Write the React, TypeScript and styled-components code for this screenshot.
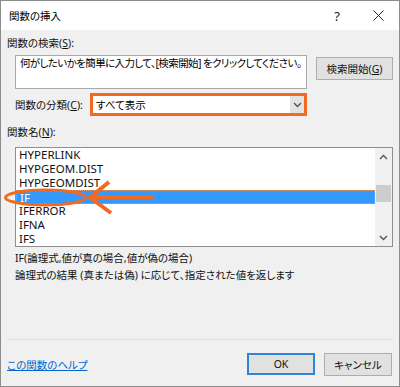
import styled, { createGlobalStyle } from 'styled-components';

const GlobalStyle = createGlobalStyle`
  html, body {
    margin: 0;
    padding: 0;
    background: #ffffff;
  }
  body {
    font-family: "Noto Sans", "Noto Sans CJK JP", sans-serif;
    font-feature-settings: "palt";
    -webkit-font-smoothing: antialiased;
  }
`;

const ORANGE = '#f26a21';

const Window = styled.div`
  position: relative;
  width: 400px;
  height: 387px;
  box-sizing: border-box;
  border: 1px solid #8c8c8c;
  background: #f0f0f0;
  display: flex;
  flex-direction: column;
  font-size: 10.5px;
  color: #000;
`;

const TitleBar = styled.div`
  height: 29px;
  background: #ffffff;
  display: flex;
  align-items: center;
  padding-left: 8px;
  flex-shrink: 0;
`;

const Title = styled.span`
  font-size: 10.5px;
  flex: 1;
`;

const TitleButton = styled.div<{ $w: number }>`
  width: ${p => p.$w}px;
  height: 29px;
  display: flex;
  align-items: center;
  justify-content: center;
  font-size: 13px;
  color: #222;
`;

const Body = styled.div`
  flex: 1;
  display: flex;
  flex-direction: column;
  padding: 5px 6px 0 6px;
`;

const Label = styled.div<{ $top?: number }>`
  line-height: 16px;
  height: 16px;
  margin-top: ${p => p.$top ?? 0}px;
  color: #111;
`;

const U = styled.span`
  text-decoration: underline;
`;

const SearchRow = styled.div`
  display: flex;
  gap: 9px;
  margin-top: 4px;
  padding-left: 8px;
`;

const SearchBox = styled.div`
  width: 292px;
  height: 34px;
  box-sizing: border-box;
  border: 1px solid #a9a9a9;
  background: #fff;
  padding: 0 3px 0 4px;
  line-height: 15px;
  letter-spacing: -0.6px;
  white-space: nowrap;
  overflow: hidden;
`;

const Button = styled.div<{ $default?: boolean; $w?: number }>`
  width: ${p => p.$w ?? 68}px;
  height: ${p => (p.$default ? 22 : 23)}px;
  box-sizing: border-box;
  background: #e1e1e1;
  border: ${p => (p.$default ? '2px solid #2f86d9' : '1px solid #adadad')};
  display: flex;
  align-items: center;
  justify-content: center;
  font-size: 10.5px;
  color: #111;
  white-space: nowrap;
`;

const SearchButton = styled(Button)`
  margin-top: 2px;
`;

const CategoryRow = styled.div`
  display: flex;
  align-items: center;
  margin-top: 4px;
  padding-left: 8px;
`;

const CategoryLabel = styled.div`
  width: 75px;
  color: #111;
`;

const Select = styled.div`
  width: 217px;
  height: 23px;
  box-sizing: border-box;
  border: 3px solid ${ORANGE};
  background: #fff;
  display: flex;
  align-items: center;
`;

const SelectText = styled.div`
  flex: 1;
  padding-left: 3px;
`;

const DropButton = styled.div`
  width: 14px;
  height: 100%;
  background: #e3e3e3;
  display: flex;
  align-items: center;
  justify-content: center;
`;

const ListBox = styled.div`
  margin: 7px 0 0 8px;
  height: 100px;
  box-sizing: border-box;
  border: 1px solid #8f8f8f;
  background: #fff;
  display: flex;
`;

const Items = styled.div`
  flex: 1;
  display: flex;
  flex-direction: column;
`;

const Item = styled.div<{ $selected?: boolean }>`
  height: 14px;
  line-height: 14px;
  padding-left: 3px;
  font-size: 11.5px;
  box-sizing: border-box;
  background: ${p => (p.$selected ? '#3399ff' : 'transparent')};
  color: ${p => (p.$selected ? '#fff' : '#111')};
  border: ${p => (p.$selected ? '1px dotted #d99a6c' : 'none')};
`;

const ScrollBar = styled.div`
  width: 17px;
  background: #f0f0f0;
  display: flex;
  flex-direction: column;
`;

const ScrollArrow = styled.div`
  height: 17px;
  display: flex;
  align-items: center;
  justify-content: center;
`;

const Track = styled.div`
  flex: 1;
  padding-top: 20px;
`;

const Thumb = styled.div`
  height: 17px;
  margin: 0 1px;
  background: #cdcdcd;
`;

const Description = styled.div`
  margin-top: 3px;
  padding-left: 8px;
  line-height: 17px;
  color: #111;
`;

const Spacer = styled.div`
  flex: 1;
`;

const Separator = styled.div`
  height: 1px;
  background: #dcdcdc;
`;

const Footer = styled.div`
  display: flex;
  align-items: center;
  padding: 13px 1px 10px 0;
`;

const HelpLink = styled.a`
  color: #0066cc;
  text-decoration: underline;
  flex: 1;
`;

const FooterButtons = styled.div`
  display: flex;
  gap: 9px;
`;

const Annotation = styled.svg`
  position: absolute;
  left: 0;
  top: 0;
  pointer-events: none;
`;

const Chevron = ({ up }: { up?: boolean }) => (
  <svg width="9" height="6" viewBox="0 0 9 6">
    <polyline
      points={up ? '1,5 4.5,1.5 8,5' : '1,1 4.5,4.5 8,1'}
      fill="none"
      stroke="#555"
      strokeWidth="1.4"
    />
  </svg>
);

const functions = ['HYPERLINK', 'HYPGEOM.DIST', 'HYPGEOMDIST', 'IF', 'IFERROR', 'IFNA', 'IFS'];

const App = () => {
  return (
    <>
      <GlobalStyle />
      <Window>
        <TitleBar>
          <Title>関数の挿入</Title>
          <TitleButton $w={40}>?</TitleButton>
          <TitleButton $w={42}>
            <svg width="11" height="11" viewBox="0 0 11 11">
              <path d="M0.5 0.5 L10.5 10.5 M10.5 0.5 L0.5 10.5" stroke="#222" strokeWidth="1" />
            </svg>
          </TitleButton>
        </TitleBar>
        <Body>
          <Label>
            関数の検索(<U>S</U>):
          </Label>
          <SearchRow>
            <SearchBox>何がしたいかを簡単に入力して、[検索開始] をクリックしてください。</SearchBox>
            <SearchButton $w={77}>
              検索開始(<U>G</U>)
            </SearchButton>
          </SearchRow>
          <CategoryRow>
            <CategoryLabel>
              関数の分類(<U>C</U>):
            </CategoryLabel>
            <Select>
              <SelectText>すべて表示</SelectText>
              <DropButton>
                <Chevron />
              </DropButton>
            </Select>
          </CategoryRow>
          <Label $top={8}>
            関数名(<U>N</U>):
          </Label>
          <ListBox>
            <Items>
              {functions.map(name => (
                <Item key={name} $selected={name === 'IF'}>
                  {name}
                </Item>
              ))}
            </Items>
            <ScrollBar>
              <ScrollArrow>
                <Chevron up />
              </ScrollArrow>
              <Track>
                <Thumb />
              </Track>
              <ScrollArrow>
                <Chevron />
              </ScrollArrow>
            </ScrollBar>
          </ListBox>
          <Description>
            <div>IF(論理式,値が真の場合,値が偽の場合)</div>
            <div>論理式の結果 (真または偽) に応じて、指定された値を返します</div>
          </Description>
          <Spacer />
          <Separator />
          <Footer>
            <HelpLink>この関数のヘルプ</HelpLink>
            <FooterButtons>
              <Button $default>OK</Button>
              <Button>キャンセル</Button>
            </FooterButtons>
          </Footer>
        </Body>
        <Annotation width="400" height="387" viewBox="0 0 400 387">
          <ellipse cx="44.5" cy="196.5" rx="40" ry="7.5" fill="none" stroke={ORANGE} strokeWidth="3" />
          <path
            d="M153 196 L90 196 M108 181 L89 196.5 L110 212"
            fill="none"
            stroke={ORANGE}
            strokeWidth="4"
            strokeLinejoin="miter"
          />
        </Annotation>
      </Window>
    </>
  );
};

export default App;
